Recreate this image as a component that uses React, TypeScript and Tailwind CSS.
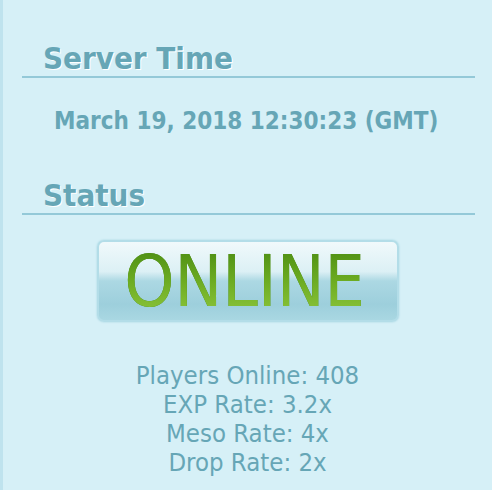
import React from "react";

const stats = [
    "Players Online: 408",
    "EXP Rate: 3.2x",
    "Meso Rate: 4x",
    "Drop Rate: 2x",
];

export default function App() {
    return (
        <div className="w-[492px] h-[490px] overflow-hidden bg-[#d6f0f7] border-l-[3px] border-[#bfe3ee] text-[#66a6b6]"
             style={{fontFamily: '"DejaVu Sans Condensed", "DejaVu Sans", sans-serif'}}>
            <div className="pl-[19px] pr-[17px] pt-[40px]">
                {/* server time */}
                <h2 className="pl-[21px] text-[31px] font-bold leading-[36px] [text-shadow:1px_1px_0_#ffffff]">
                    Server Time
                </h2>
                <div className="h-[2px] bg-[#94c9d8]"/>
                <p className="mt-[29px] pl-[32px] text-[24px] font-bold leading-[28px]">
                    March 19, 2018 12:30:23 (GMT)
                </p>

                {/* status */}
                <h2 className="mt-[42px] pl-[21px] text-[31px] font-bold leading-[36px] [text-shadow:1px_1px_0_#ffffff]">
                    Status
                </h2>
                <div className="h-[2px] bg-[#94c9d8]"/>

                <div className="flex justify-center mt-[25px] pr-[2px]">
                    <div className="w-[302px] h-[82px] pr-[6px] rounded-[7px] border-2 border-[#b3dde8] shadow-[0_0_2px_#9fd1de] bg-[linear-gradient(to_bottom,#f0f9fb_0%,#dcf0f5_38%,#acd8e3_50%,#9dcfdc_80%,#a9d7e2_100%)] flex items-center justify-center">
                        <span
                            className="text-[71px] leading-none bg-[linear-gradient(to_bottom,#4b8c12_0%,#6dac22_50%,#8dc63d_100%)] bg-clip-text text-transparent [filter:drop-shadow(0_0_0.6px_#3f7d0e)]">
                            ONLINE
                        </span>
                    </div>
                </div>

                <div className="mt-[39px] text-center text-[25.5px] leading-[29px] pr-[2px]">
                    {stats.map((s, i) => (
                        <p key={i}>{s}</p>
                    ))}
                </div>
            </div>
        </div>
    );
}
